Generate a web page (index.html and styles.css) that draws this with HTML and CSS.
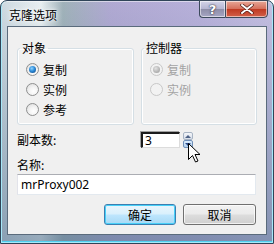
FILE: index.html
```html
<!DOCTYPE html>
<html lang="zh-CN">
<head>
    <meta charset="UTF-8" />
    <title>克隆选项</title>
    <link rel="stylesheet" href="styles.css">
</head>
<body>
    <div class="window">
        <div class="titlebar">
            <span class="title">克隆选项</span>
            <div class="caption-buttons">
                <div class="cap help">?</div>
                <div class="cap close">
                    <svg width="14" height="10" viewBox="0 0 14 10">
                        <path d="M2 1 L12 9 M12 1 L2 9" stroke="#4a1a14" stroke-width="3.4" stroke-linecap="round"/>
                        <path d="M2 1 L12 9 M12 1 L2 9" stroke="#fff" stroke-width="2" stroke-linecap="round"/>
                    </svg>
                </div>
            </div>
        </div>
        <div class="client">
            <div class="groups">
                <fieldset class="group">
                    <legend>对象</legend>
                    <label class="radio checked"><span class="dot"></span>复制</label>
                    <label class="radio"><span class="dot"></span>实例</label>
                    <label class="radio"><span class="dot"></span>参考</label>
                </fieldset>
                <fieldset class="group disabled">
                    <legend>控制器</legend>
                    <label class="radio checked"><span class="dot"></span>复制</label>
                    <label class="radio"><span class="dot"></span>实例</label>
                </fieldset>
            </div>
            <div class="copies-row">
                <span class="field-label">副本数:</span>
                <div class="spinner">
                    <div class="spin-input">3</div>
                    <div class="spin-btns">
                        <div class="spin up"><span class="tri-up"></span></div>
                        <div class="spin down"><span class="tri-down"></span></div>
                    </div>
                </div>
            </div>
            <div class="name-field">
                <span class="field-label">名称:</span>
                <div class="text-input">mrProxy002</div>
            </div>
            <div class="actions">
                <div class="btn default">确定</div>
                <div class="btn">取消</div>
            </div>
        </div>
        <svg class="cursor" width="13" height="20" viewBox="0 0 13 20">
            <path d="M0.5 0.5 L0.5 16.5 L4.5 12.5 L7.5 19 L10 18 L7 11.5 L12 11.5 Z" fill="#fff" stroke="#000" stroke-width="1" stroke-linejoin="miter"/>
        </svg>
    </div>
</body>
</html>
```

FILE: styles.css
```css
* {
    box-sizing: border-box;
}
body {
    margin: 0;
    padding: 0;
    background: #fff;
    font-family: "Noto Sans", "Noto Sans CJK SC", sans-serif;
    font-size: 12px;
    color: #000;
}
.window {
    position: relative;
    width: 274px;
    height: 244px;
    padding: 0 6px 8px 6px;
    border: 1px solid #2f4458;
    border-radius: 7px 7px 0 0;
    background:
        linear-gradient(180deg, rgba(90, 118, 146, 0) 0px, rgba(90, 118, 146, 0.15) 60px, rgba(80, 110, 140, 0.55) 244px),
        linear-gradient(90deg, rgba(200, 214, 222, 0.9) 0px, rgba(230, 238, 240, 0.9) 40px, rgba(150, 170, 178, 0.9) 62px, rgba(168, 160, 206, 0.9) 110px, rgba(176, 168, 214, 0.9) 200px, rgba(190, 184, 222, 0.9) 274px);
    box-shadow: inset 0 0 0 1px rgba(255, 255, 255, 0.5), inset 0 -1px 0 1px #4fd0f0;
    display: flex;
    flex-direction: column;
}
.titlebar {
    height: 25px;
    display: flex;
    justify-content: space-between;
    align-items: flex-start;
}
.title {
    font-family: "Noto Sans CJK SC", sans-serif;
    font-size: 12px;
    line-height: 14px;
    margin: 7px 0 0 2px;
    color: #000;
    text-shadow: 0 0 6px #fff, 0 0 3px #fff;
}
.caption-buttons {
    display: flex;
    margin-top: -1px;
    margin-right: -1px;
}
.cap {
    height: 18px;
    border: 1px solid #3c4a5c;
    display: flex;
    align-items: center;
    justify-content: center;
    box-shadow: inset 0 0 0 1px rgba(255, 255, 255, 0.55);
}
.help {
    width: 26px;
    border-radius: 0 0 0 4px;
    border-right: none;
    background: linear-gradient(#d4d4e8 0%, #b6b6d2 48%, #8e8ea8 52%, #a6a6c4 100%);
    color: #fff;
    font-family: "DejaVu Sans", sans-serif;
    font-weight: bold;
    font-size: 13px;
    text-shadow: 0 0 2px #334, 0 0 1px #223;
}
.close {
    width: 43px;
    border-radius: 0 0 4px 0;
    background: linear-gradient(#e8a898 0%, #d6705c 48%, #c03a22 52%, #d2604a 100%);
}
.client {
    flex: 1;
    background: #f0f0f0;
    border: 1px solid #5a6b7c;
    padding: 13px 9px 0 9px;
    display: flex;
    flex-direction: column;
}
.groups {
    display: grid;
    grid-template-columns: 117px 116px;
    column-gap: 7px;
}
.group {
    margin: 0;
    padding: 3px 0 5px 8px;
    border: 1px solid #d5dfe5;
    border-radius: 3px;
    box-shadow: inset 0 0 0 1px #fff;
    min-width: 0;
}
.group legend {
    font-family: "Noto Sans CJK SC", sans-serif;
    line-height: 16px;
    padding: 0 2px;
    margin-left: -6px;
}
.radio {
    height: 20px;
    display: flex;
    align-items: center;
    gap: 4px;
    font-family: "Noto Sans CJK SC", sans-serif;
}
.dot {
    width: 13px;
    height: 13px;
    border-radius: 50%;
    border: 1px solid #8e8f8f;
    background: radial-gradient(circle at 60% 65%, #fff 0%, #f4f4f4 40%, #d8d8d8 100%);
    position: relative;
}
.radio.checked .dot::after {
    content: "";
    position: absolute;
    left: 2px;
    top: 2px;
    width: 7px;
    height: 7px;
    border-radius: 50%;
    background: radial-gradient(circle at 40% 35%, #8fd4ff 0%, #2c8ad8 45%, #0d3f78 100%);
}
.disabled .radio {
    color: #a3a3a3;
}
.disabled .dot {
    border-color: #c8c8c8;
    background: #f2f2f2;
}
.disabled .radio.checked .dot::after {
    background: radial-gradient(circle at 40% 35%, #e2e2e2 0%, #b4b4b4 60%, #9a9a9a 100%);
}
.copies-row {
    display: flex;
    align-items: center;
    margin-top: 7px;
    height: 16px;
}
.field-label {
    font-family: "Noto Sans CJK SC", sans-serif;
    line-height: 16px;
}
.copies-row .field-label {
    width: 124px;
}
.spinner {
    display: flex;
    gap: 3px;
}
.spin-input {
    width: 39px;
    height: 16px;
    background: #fff;
    border-style: solid;
    border-width: 2px 1px 1px 2px;
    border-color: #1c1c1c #dcdcdc #dcdcdc #1c1c1c;
    box-shadow: -1px -1px 0 #a0a0a0;
    padding-left: 2px;
    line-height: 13px;
    font-size: 12px;
}
.spin-btns {
    display: flex;
    flex-direction: column;
    width: 10px;
    height: 16px;
}
.spin {
    flex: 1;
    border: 1px solid #a8b4c4;
    border-radius: 2px;
    background: linear-gradient(#f4f6fa, #d6dde8);
    display: flex;
    align-items: center;
    justify-content: center;
}
.spin.down {
    border-color: #6f8fb8;
    background: linear-gradient(#dcecfc, #b0d0f0);
}
.tri-up {
    width: 0;
    height: 0;
    border-left: 3px solid transparent;
    border-right: 3px solid transparent;
    border-bottom: 3px solid #4d6185;
}
.tri-down {
    width: 0;
    height: 0;
    border-left: 3px solid transparent;
    border-right: 3px solid transparent;
    border-top: 3px solid #2a4a8a;
}
.name-field {
    margin-top: 9px;
    display: flex;
    flex-direction: column;
    gap: 1px;
}
.text-input {
    width: 239px;
    height: 21px;
    background: #fff;
    border: 1px solid #abadb3;
    border-color: #abadb3 #e3e9ef #e3e9ef #e2e3ea;
    padding-left: 3px;
    line-height: 19px;
    font-size: 12px;
}
.actions {
    display: flex;
    justify-content: flex-end;
    gap: 7px;
    margin-top: 9px;
    padding-right: 1px;
}
.btn {
    width: 73px;
    height: 21px;
    border: 1px solid #707070;
    border-radius: 3px;
    background: linear-gradient(#f2f2f2 0%, #ebebeb 48%, #dddddd 52%, #cfcfcf 100%);
    box-shadow: inset 0 0 0 1px rgba(255, 255, 255, 0.7);
    font-family: "Noto Sans CJK SC", sans-serif;
    display: flex;
    align-items: center;
    justify-content: center;
}
.btn.default {
    width: 72px;
    border-color: #3c7fb1;
    background: linear-gradient(#eaf6fd 0%, #d9f0fc 48%, #bee6fd 52%, #a7d9f5 100%);
    box-shadow: inset 0 0 0 1px #48d0f8;
}
.cursor {
    position: absolute;
    left: 187px;
    top: 142px;
}
```
